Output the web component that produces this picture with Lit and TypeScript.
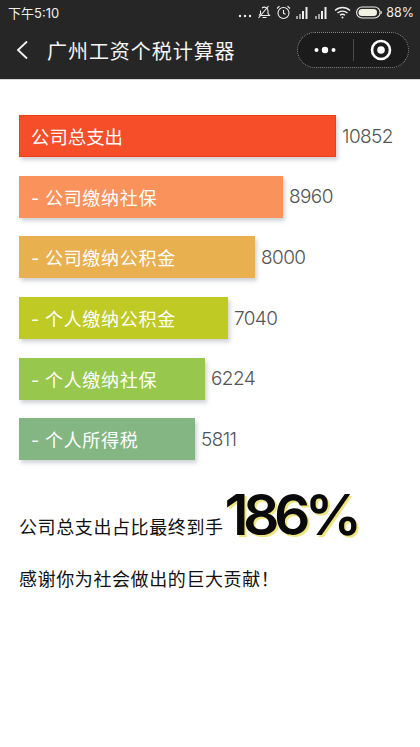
import { LitElement, html, css } from "lit";
import { customElement } from "lit/decorators.js";

const rows = [
  { label: "公司总支出", value: "10852", width: 317, color: "#f54e29", edge: "#ee3f1c", sub: false },
  { label: "- 公司缴纳社保", value: "8960", width: 264, color: "#f9925b", edge: "#f9925b", sub: true },
  { label: "- 公司缴纳公积金", value: "8000", width: 236, color: "#e8b04f", edge: "#e8b04f", sub: true },
  { label: "- 个人缴纳公积金", value: "7040", width: 209, color: "#c0ca24", edge: "#c0ca24", sub: true },
  { label: "- 个人缴纳社保", value: "6224", width: 186, color: "#97c74c", edge: "#97c74c", sub: true },
  { label: "- 个人所得税", value: "5811", width: 176, color: "#83b683", edge: "#83b683", sub: true },
];

@customElement("app-root")
export class AppRoot extends LitElement {
  static styles = css`
    :host {
      display: block;
      width: 420px;
      height: 747px;
      overflow: hidden;
      background: #fff;
      font-family: "Inter", "Noto Sans CJK SC", sans-serif;
      color: #111;
    }
    .top {
      background: #262626;
      height: 79px;
      color: #fff;
      display: flex;
      flex-direction: column;
      border-bottom: 1px solid #d8d8d8;
    }
    .status {
      height: 24px;
      padding: 0 6px 0 8px;
      display: flex;
      align-items: center;
      justify-content: space-between;
      font-size: 13px;
      color: #eee;
    }
    .status-right {
      display: flex;
      align-items: center;
      gap: 5px;
    }
    .status-right svg {
      display: block;
    }
    .pct {
      font-size: 12.5px;
      margin-left: -1px;
    }
    .nav {
      flex: 1;
      display: flex;
      align-items: center;
      padding: 0 11px 3px 16px;
    }
    .back {
      display: block;
      margin-right: 19px;
    }
    .title {
      flex: 1;
      font-size: 20px;
      letter-spacing: 0.95px;
      color: #f4f4f4;
    }
    .capsule {
      width: 112px;
      height: 36px;
      box-sizing: border-box;
      border: 1px dotted #8a8a8a;
      border-radius: 18px;
      background: #1b1b1b;
      display: flex;
      align-items: center;
    }
    .cap-half {
      flex: 1;
      display: flex;
      justify-content: center;
      align-items: center;
    }
    .cap-sep {
      width: 1px;
      height: 22px;
      background: #4a4a4a;
    }
    .chart {
      padding: 35px 0 0 19px;
      display: flex;
      flex-direction: column;
      gap: 18.7px;
    }
    .row {
      display: flex;
      align-items: center;
      gap: 6px;
    }
    .bar {
      height: 42px;
      box-sizing: border-box;
      padding-left: 11px;
      display: flex;
      align-items: center;
      color: #fff;
      font-size: 18.4px;
      box-shadow: 2px 3px 4px rgba(120, 125, 140, 0.35);
      white-space: pre;
    }
    .bar.sub {
      font-size: 18px;
      letter-spacing: 0.7px;
      word-spacing: -0.8px;
    }
    .value {
      font-size: 19px;
      font-weight: 300;
      color: #555;
      letter-spacing: -0.6px;
    }
    .summary {
      padding: 31px 0 0 19px;
    }
    .line1 {
      display: flex;
      align-items: center;
      height: 70px;
      font-size: 18px;
      letter-spacing: 0.6px;
    }
    .big {
      font-size: 57px;
      font-weight: 600;
      letter-spacing: -5.6px;
      margin-left: 1px;
      margin-top: -24px;
      color: #0a0a0a;
      text-shadow: 2px 2px 0 #efe57f;
      line-height: 1;
    }
    .line2 {
      font-size: 18px;
      letter-spacing: 0.6px;
      margin-top: 4px;
    }
  `;

  render() {
    return html`
      <div class="top">
        <div class="status">
          <span>下午5:10</span>
          <div class="status-right">
            <svg width="14" height="14" viewBox="0 0 14 14"><g fill="#eee"><circle cx="2" cy="11" r="1.2"/><circle cx="7" cy="11" r="1.2"/><circle cx="12" cy="11" r="1.2"/></g></svg>
            <svg width="14" height="14" viewBox="0 0 14 14" fill="none" stroke="#eee" stroke-width="1.1"><path d="M3 10.5h9.5L11 8.5V6a3.7 3.7 0 0 0-6-3M3.5 5.5v3L2 10.5M5.5 12.5h4M1.500 13L11.500 1"/></svg>
            <svg width="15" height="15" viewBox="0 0 15 15" fill="none" stroke="#eee" stroke-width="1.1"><circle cx="7.500" cy="8" r="5.500"/><path d="M7.500 5v3.300l2 1M1 3.500L3.500 1.200M14 3.500L11.500 1.200"/></svg>
            <svg width="14" height="13" viewBox="0 0 14 13" fill="#eee"><rect x="0" y="10" width="2" height="3" opacity=".6"/><rect x="3" y="8" width="2" height="5" opacity=".6"/><rect x="6" y="5" width="2" height="8"/><rect x="9.500" y="1" width="2" height="12"/></svg>
            <svg width="14" height="13" viewBox="0 0 14 13" fill="#eee"><rect x="0" y="10" width="2" height="3" opacity=".6"/><rect x="3" y="8" width="2" height="5" opacity=".6"/><rect x="6" y="5" width="2" height="8"/><rect x="9.500" y="1" width="2" height="12"/></svg>
            <svg width="17" height="13" viewBox="0 0 17 13" fill="none" stroke="#eee" stroke-width="1.400"><path d="M1 4.500a11 11 0 0 1 15 0M3.500 7a7.500 7.500 0 0 1 10 0M6 9.300a3.800 3.800 0 0 1 5 0"/><circle cx="8.500" cy="11.500" r="1" fill="#eee" stroke="none"/></svg>
            <svg width="26" height="13" viewBox="0 0 26 13"><rect x=".6" y="1" width="23.500" height="11" rx="5.500" fill="none" stroke="#eee" stroke-width="1.100"/><rect x="2.500" y="3" width="18.500" height="7" rx="3.500" fill="#f2f2e4"/><rect x="24.500" y="5" width="1.200" height="3" fill="#ddd"/></svg>
            <span class="pct">88%</span>
          </div>
        </div>
        <div class="nav">
          <svg class="back" width="12" height="20" viewBox="0 0 12 20" fill="none" stroke="#f4f4f4" stroke-width="1.800"><path d="M11 1.500L2 10l9 8.500"/></svg>
          <div class="title">广州工资个税计算器</div>
          <div class="capsule">
            <div class="cap-half">
              <svg width="24" height="10" viewBox="0 0 24 10" fill="#fff"><circle cx="3.500" cy="5" r="2"/><circle cx="12" cy="5" r="3.200"/><circle cx="20.500" cy="5" r="2"/></svg>
            </div>
            <div class="cap-sep"></div>
            <div class="cap-half">
              <svg width="22" height="22" viewBox="0 0 22 22"><circle cx="11" cy="11" r="9" fill="none" stroke="#fff" stroke-width="2.600"/><circle cx="11" cy="11" r="3.800" fill="#fff"/></svg>
            </div>
          </div>
        </div>
      </div>
      <div class="chart">
        ${rows.map(
          (r) => html`
            <div class="row">
              <div
                class="bar ${r.sub ? "sub" : ""}"
                style="width:${r.width}px;background:${r.color};border:1px solid ${r.edge}"
              >${r.label}</div>
              <span class="value">${r.value}</span>
            </div>
          `
        )}
      </div>
      <div class="summary">
        <div class="line1">公司总支出占比最终到手<span class="big">186%</span></div>
        <div class="line2">感谢你为社会做出的巨大贡献！</div>
      </div>
    `;
  }
}
